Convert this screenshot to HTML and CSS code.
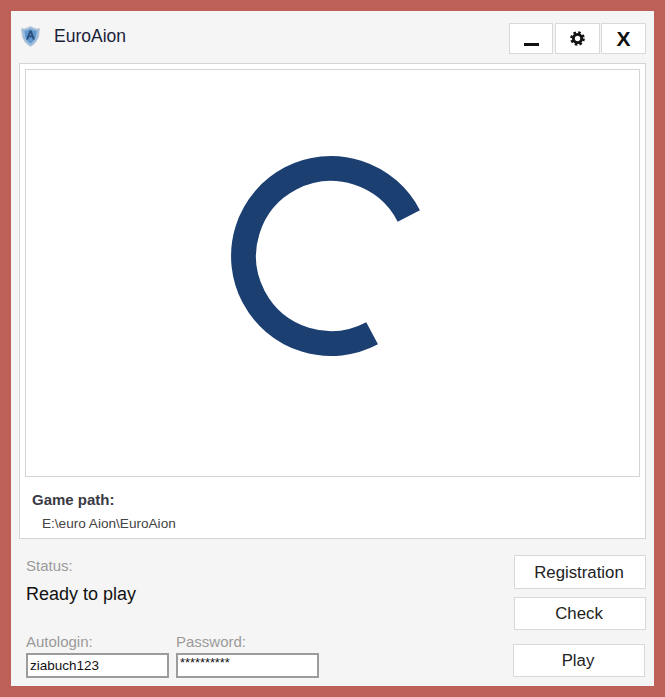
FILE: index.html
```html
<!DOCTYPE html>
<html lang="en">
<head>
  <meta charset="UTF-8" />
  <title>EuroAion</title>
  <link rel="stylesheet" href="styles.css">
</head>
<body>
  <!-- Launcher window -->
  <div class="window">
    <!-- Title bar -->
    <header class="titlebar">
      <svg class="logo" width="19" height="21" viewBox="0 0 19 21">
        <path d="M0.500 2.500 Q3 3.500 5 2.500 Q7.500 1.500 9.500 0.500 Q11.500 1.500 14 2.500 Q16 3.500 18.500 2.500 L17.500 11 Q15.500 17 9.500 20.500 Q3.500 17 1.500 11 Z" fill="#9dbbdc" stroke="#b9c4cf" stroke-width="0.700"/>
        <path d="M3.500 5 Q7 4.500 9.500 3 Q12 4.500 15.500 5 L14.800 11 Q13 15.500 9.500 17.500 Q6 15.500 4.200 11 Z" fill="#5f97cf"/>
        <path d="M5 13.500 L8.600 4.500 L10.500 4.500 L14 13.500 L11.800 13.500 L11 11.200 L8 11.200 L7.200 13.500 Z M8.600 9.600 L10.400 9.600 L9.500 7 Z" fill="#2c4f7a" fill-rule="evenodd"/>
      </svg>
      <span class="app-name">EuroAion</span>
      <div class="window-buttons">
        <button class="win-btn minimize" type="button"><span class="dash"></span></button>
        <button class="win-btn settings" type="button">
          <svg width="15" height="15" viewBox="0 0 16 16">
            <circle cx="8" cy="8" r="4.400" fill="none" stroke="#111" stroke-width="3"/>
            <circle cx="8" cy="8" r="6.500" fill="none" stroke="#111" stroke-width="2.600" stroke-dasharray="2.700 2.400"/>
          </svg>
        </button>
        <button class="win-btn close" type="button">X</button>
      </div>
    </header>

    <!-- Main panel with loading spinner and game path -->
    <section class="panel">
      <div class="viewer">
        <svg width="210" height="210" viewBox="0 0 210 210">
          <path d="M182.800 64.900 A87.500 87.500 0 1 0 146.100 182.300" fill="none" stroke="#1c3f72" stroke-width="25"/>
        </svg>
      </div>
      <div class="game-path">
        <strong>Game path:</strong>
        <span class="path-value">E:\euro Aion\EuroAion</span>
      </div>
    </section>

    <!-- Status, login and actions -->
    <footer class="bottom">
      <div class="info">
        <div class="status">
          <div class="muted">Status:</div>
          <div class="status-text">Ready to play</div>
        </div>
        <div class="login">
          <label class="field">
            <span class="muted">Autologin:</span>
            <input type="text" value="ziabuch123" />
          </label>
          <label class="field">
            <span class="muted">Password:</span>
            <input class="pass" type="text" value="**********" />
          </label>
        </div>
      </div>
      <div class="actions">
        <button class="action register" type="button">Registration</button>
        <button class="action check" type="button">Check</button>
        <button class="action play" type="button">Play</button>
      </div>
    </footer>
  </div>
</body>
</html>
```

FILE: styles.css
```css
/* Window frame */
body {
  margin: 0;
  height: 697px;
  box-sizing: border-box;
  padding: 11px;
  background: #bd6158;
  font-family: "Liberation Sans", Arial, sans-serif;
  color: #111;
  overflow: hidden;
}

.window {
  height: 675px;
  padding: 12px 8px 0 8px;
  background: #f5f5f5;
  box-sizing: border-box;
}

/* Title bar */
.titlebar {
  display: flex;
  align-items: flex-start;
  height: 40px;
}

.logo {
  margin: 3px 0 0 2px;
}

.app-name {
  margin: 2px 0 0 14px;
  font-size: 17.500px;
  line-height: 22px;
  color: #1a2238;
}

.window-buttons {
  display: flex;
  margin-left: auto;
}

.win-btn {
  display: flex;
  align-items: center;
  justify-content: center;
  width: 45px;
  height: 31px;
  padding: 0;
  background: #fff;
  border: 1px solid #d9d9d9;
  font-family: "Liberation Sans", sans-serif;
  font-size: 21px;
  font-weight: 700;
  color: #111;
}

.minimize {
  width: 44px;
}

.settings {
  margin: 0 1px 0 2px;
}

.dash {
  width: 15px;
  height: 3px;
  margin-top: 11px;
  background: #111;
}

/* Main panel */
.panel {
  height: 476px;
  box-sizing: border-box;
  padding: 5px;
  background: #fff;
  border: 1px solid #d4d4d4;
}

.viewer {
  height: 408px;
  box-sizing: border-box;
  padding: 81px 0 0 200px;
  border: 1px solid #d4d4d4;
}

.game-path {
  display: flex;
  flex-direction: column;
  padding: 14px 0 0 7px;
  font-size: 15px;
  color: #333;
}

.game-path strong {
  line-height: 18px;
  color: #3a3a44;
}

.path-value {
  margin: 6px 0 0 10px;
  font-size: 13.600px;
  line-height: 17px;
  color: #444;
}

/* Bottom area */
.bottom {
  display: flex;
  justify-content: space-between;
}

.info {
  padding: 18px 0 0 7px;
}

.muted {
  font-size: 15px;
  line-height: 18px;
  color: #9a9a9a;
}

.status-text {
  margin-top: 8px;
  font-size: 18px;
  line-height: 22px;
  color: #111;
}

.login {
  display: flex;
  gap: 7px;
  margin-top: 28px;
}

.field {
  display: flex;
  flex-direction: column;
}

.field input {
  width: 143px;
  height: 25px;
  box-sizing: border-box;
  margin: 2px 0 0;
  padding: 0 2px;
  background: #fff;
  border: 2px solid #9c9c9c;
  border-radius: 0;
  font-family: "Liberation Sans", sans-serif;
  font-size: 13.500px;
  color: #111;
}

.field .pass {
  padding-bottom: 7px;
  font-size: 12.800px;
}

.actions {
  display: flex;
  flex-direction: column;
  padding-top: 16px;
}

.action {
  width: 132px;
  height: 33px;
  padding: 1px 2px 0 0;
  background: #fff;
  border: 1px solid #d9d9d9;
  font-family: "Liberation Sans", sans-serif;
  font-size: 16.800px;
  color: #222;
}

.action.register {
  height: 34px;
  padding-top: 2px;
}

.action.check {
  margin-top: 8px;
}

.action.play {
  margin: 14px 0 0 -1px;
}
```
